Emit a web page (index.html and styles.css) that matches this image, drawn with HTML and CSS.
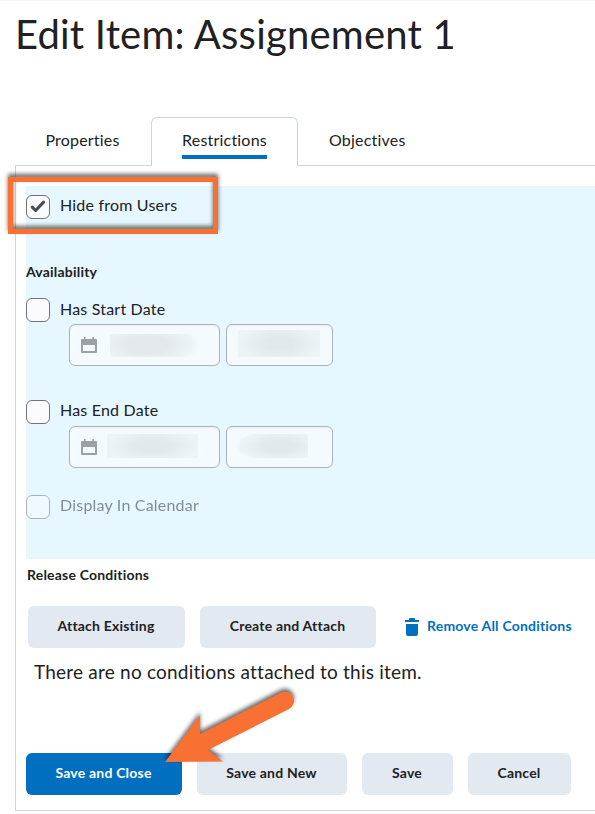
FILE: index.html
```html
<!DOCTYPE html>
<html lang="en">
<head>
    <meta charset="UTF-8">
    <meta name="viewport" content="width=device-width, initial-scale=1.0">
    <title>Edit Item</title>
    <link rel="stylesheet" href="styles.css">
</head>
<body>
    <div class="page">
        <h1>Edit Item: Assignement 1</h1>

        <div class="tabs">
            <div class="tab tab-first"><span>Properties</span></div>
            <div class="tab active"><span>Restrictions</span></div>
            <div class="tab tab-last"><span>Objectives</span></div>
        </div>

        <div class="panel">
            <div class="restrictions">
                <label class="check-row">
                    <span class="checkbox">
                        <svg width="24" height="24" viewBox="0 0 24 24"><path d="M6.2 12.2l3.4 3.3 8-8.4" fill="none" stroke="#494c4e" stroke-width="3" stroke-linecap="round" stroke-linejoin="round"/></svg>
                    </span>
                    <span>Hide from Users</span>
                </label>

                <h2>Availability</h2>
                <label class="check-row start">
                    <span class="checkbox"></span>
                    <span>Has Start Date</span>
                </label>
                <div class="date-row">
                    <div class="field date">
                        <svg class="calendar" width="16" height="16" viewBox="0 0 16 16"><path fill="#9da1a3" fill-rule="evenodd" d="M3 0h1.6v2h6.8V0H13v2h2a1 1 0 0 1 1 1v12a1 1 0 0 1-1 1H1a1 1 0 0 1-1-1V3a1 1 0 0 1 1-1h2zM2 8v6h12V8z"/></svg>
                        <span class="redacted start-date"></span>
                    </div>
                    <div class="field time"><span class="redacted start-time"></span></div>
                </div>

                <label class="check-row end">
                    <span class="checkbox"></span>
                    <span>Has End Date</span>
                </label>
                <div class="date-row">
                    <div class="field date">
                        <svg class="calendar" width="16" height="16" viewBox="0 0 16 16"><path fill="#9da1a3" fill-rule="evenodd" d="M3 0h1.6v2h6.8V0H13v2h2a1 1 0 0 1 1 1v12a1 1 0 0 1-1 1H1a1 1 0 0 1-1-1V3a1 1 0 0 1 1-1h2zM2 8v6h12V8z"/></svg>
                        <span class="redacted end-date"></span>
                    </div>
                    <div class="field time"><span class="redacted end-time"></span></div>
                </div>

                <label class="check-row disabled">
                    <span class="checkbox"></span>
                    <span>Display In Calendar</span>
                </label>
            </div>

            <h2 class="release">Release Conditions</h2>
            <div class="condition-buttons">
                <button class="btn attach">Attach Existing</button>
                <button class="btn create">Create and Attach</button>
                <button class="btn-link">
                    <svg width="14" height="18" viewBox="0 0 14 18"><path fill="#006fbf" d="M0 2h4V1a1 1 0 0 1 1-1h4a1 1 0 0 1 1 1v1h4v2H0zM1 6h12v10a2 2 0 0 1-2 2H3a2 2 0 0 1-2-2z"/></svg>
                    <span>Remove All Conditions</span>
                </button>
            </div>
            <p class="no-conditions">There are no conditions attached to this item.</p>

            <div class="form-buttons">
                <button class="btn primary">Save and Close</button>
                <button class="btn save-new">Save and New</button>
                <button class="btn save">Save</button>
                <button class="btn cancel">Cancel</button>
            </div>
        </div>

        <!-- Callouts drawn over the form -->
        <div class="highlight"></div>
        <svg class="arrow" width="150" height="90" viewBox="0 0 150 90"><path fill="#f97033" d="M10 77L45 30V49L125.500 7.700A9 9 0 0 1 134 24L53 65L68 76.500z"/></svg>
    </div>
</body>
</html>
```
FILE: styles.css
```css
* {
    box-sizing: border-box;
}

body {
    margin: 0;
    background: #fff;
    color: #202122;
    font-family: Lato, sans-serif;
    font-size: 16px;
    overflow: hidden;
}

.page {
    position: relative;
    height: 814px;
    border-top: 1px solid #f6f6f6;
}

h1 {
    margin: 0;
    height: 116px;
    padding: 9px 0 0 15px;
    font-size: 40px;
    font-weight: 400;
    line-height: 48px;
    letter-spacing: 0.2px;
    white-space: nowrap;
}

.tabs {
    display: flex;
    height: 49px;
    margin-left: 15px;
    line-height: 20px;
    letter-spacing: 0.2px;
}

.tab {
    display: flex;
    justify-content: center;
    padding-top: 13px;
    border-bottom: 1px solid #cdd5dc;
}

.tab-first {
    width: 136px;
    padding-right: 1px;
}

.tab-last {
    flex: 1;
    justify-content: flex-start;
    padding-left: 31px;
}

.tab.active {
    width: 147px;
    padding-top: 12px;
    border: 1px solid #cdd5dc;
    border-bottom: none;
    border-radius: 6px 6px 0 0;
}

.tab.active span {
    height: 29px;
    border-bottom: 4px solid #006fbf;
    border-radius: 4px 4px 0 0;
}

.panel {
    height: 645px;
    margin-left: 15px;
    padding: 20px 0 0 10px;
    border-left: 1px solid #cdd5dc;
    border-bottom: 1px solid #cdd5dc;
}

.restrictions {
    height: 373px;
    padding-top: 9px;
    background: #e6f7ff;
}

.check-row {
    display: flex;
    gap: 10px;
    height: 24px;
    line-height: 20px;
    letter-spacing: 0.2px;
}

.check-row.start {
    line-height: 22px;
}

.checkbox {
    width: 24px;
    height: 24px;
    border: 1px solid #6e7477;
    border-radius: 6px;
    background: #fbfbff;
}

.checkbox svg {
    display: block;
    margin: -1px;
}

.check-row.end {
    margin-top: 34px;
}

.check-row.disabled {
    margin-top: 27px;
    opacity: 0.5;
}

h2 {
    margin: 43px 0 16px;
    font-size: 14px;
    font-weight: 700;
    line-height: 20px;
    letter-spacing: 0.2px;
}

.date-row {
    display: flex;
    gap: 6px;
    margin: 2px 0 0 43px;
}

.field {
    display: flex;
    height: 42px;
    border: 1px solid #abb3b7;
    border-radius: 6px;
    background: #f3fbff;
    box-shadow: inset 0 2px 0 #edf5f8;
}

.date {
    width: 151px;
}

.time {
    width: 107px;
}

.calendar {
    margin: 12px 0 0 11px;
}

/* Blurred out values */
.redacted {
    height: 23px;
    margin-top: 9px;
    background: radial-gradient(ellipse 50% 70%, #e2e9ec 35%, #edf4f6 100%);
}

.start-date {
    width: 92px;
    margin-left: 13px;
    background: radial-gradient(ellipse 58% 95% at 40% 45%, #e3e9ec 40%, #edf4f6 85%, #f3fbff);
}

.start-time {
    width: 82px;
    height: 27px;
    margin: 5px 0 0 11px;
}

.end-date {
    width: 91px;
    height: 24px;
    margin: 7px 0 0 10px;
}

.end-time {
    width: 71px;
    height: 24px;
    margin: 7px 0 0 10px;
    background: radial-gradient(ellipse 62% 70% at 60% 50%, #e2e9ec 35%, #edf4f6 90%, #f3fbff);
}

h2.release {
    margin: 6px 0 21px 1px;
}

.condition-buttons {
    display: flex;
    gap: 15px;
    margin-left: 2px;
}

.btn,
.btn-link {
    height: 42px;
    padding: 0 1px 4px 0;
    border: none;
    border-radius: 6px;
    background: #e3e9f1;
    color: #202122;
    font-family: inherit;
    font-size: 14px;
    font-weight: 700;
    letter-spacing: 0.2px;
    white-space: nowrap;
}

.attach {
    width: 157px;
}

.create {
    width: 176px;
}

.btn-link {
    display: flex;
    align-items: center;
    gap: 8px;
    margin-left: 14px;
    background: none;
    color: #006fbf;
}

.btn-link svg {
    margin-top: 4px;
}

.no-conditions {
    margin: 12px 0 0 8px;
    font-size: 19px;
    line-height: 24px;
    letter-spacing: 0.21px;
}

.form-buttons {
    display: flex;
    gap: 15px;
    margin-top: 69px;
}

.primary {
    width: 156px;
    background: #006fbf;
    color: #fff;
}

.save-new {
    width: 150px;
}

.save {
    width: 91px;
}

.cancel {
    width: 103px;
}

.highlight {
    position: absolute;
    top: 176px;
    left: 8px;
    width: 210px;
    height: 57px;
    border: 5px solid #f97033;
    filter: drop-shadow(0 -3px 2px rgba(0, 0, 0, 0.6));
}

.arrow {
    position: absolute;
    top: 684px;
    left: 155px;
    filter: drop-shadow(0 -3px 2px rgba(0, 0, 0, 0.6));
}
```
